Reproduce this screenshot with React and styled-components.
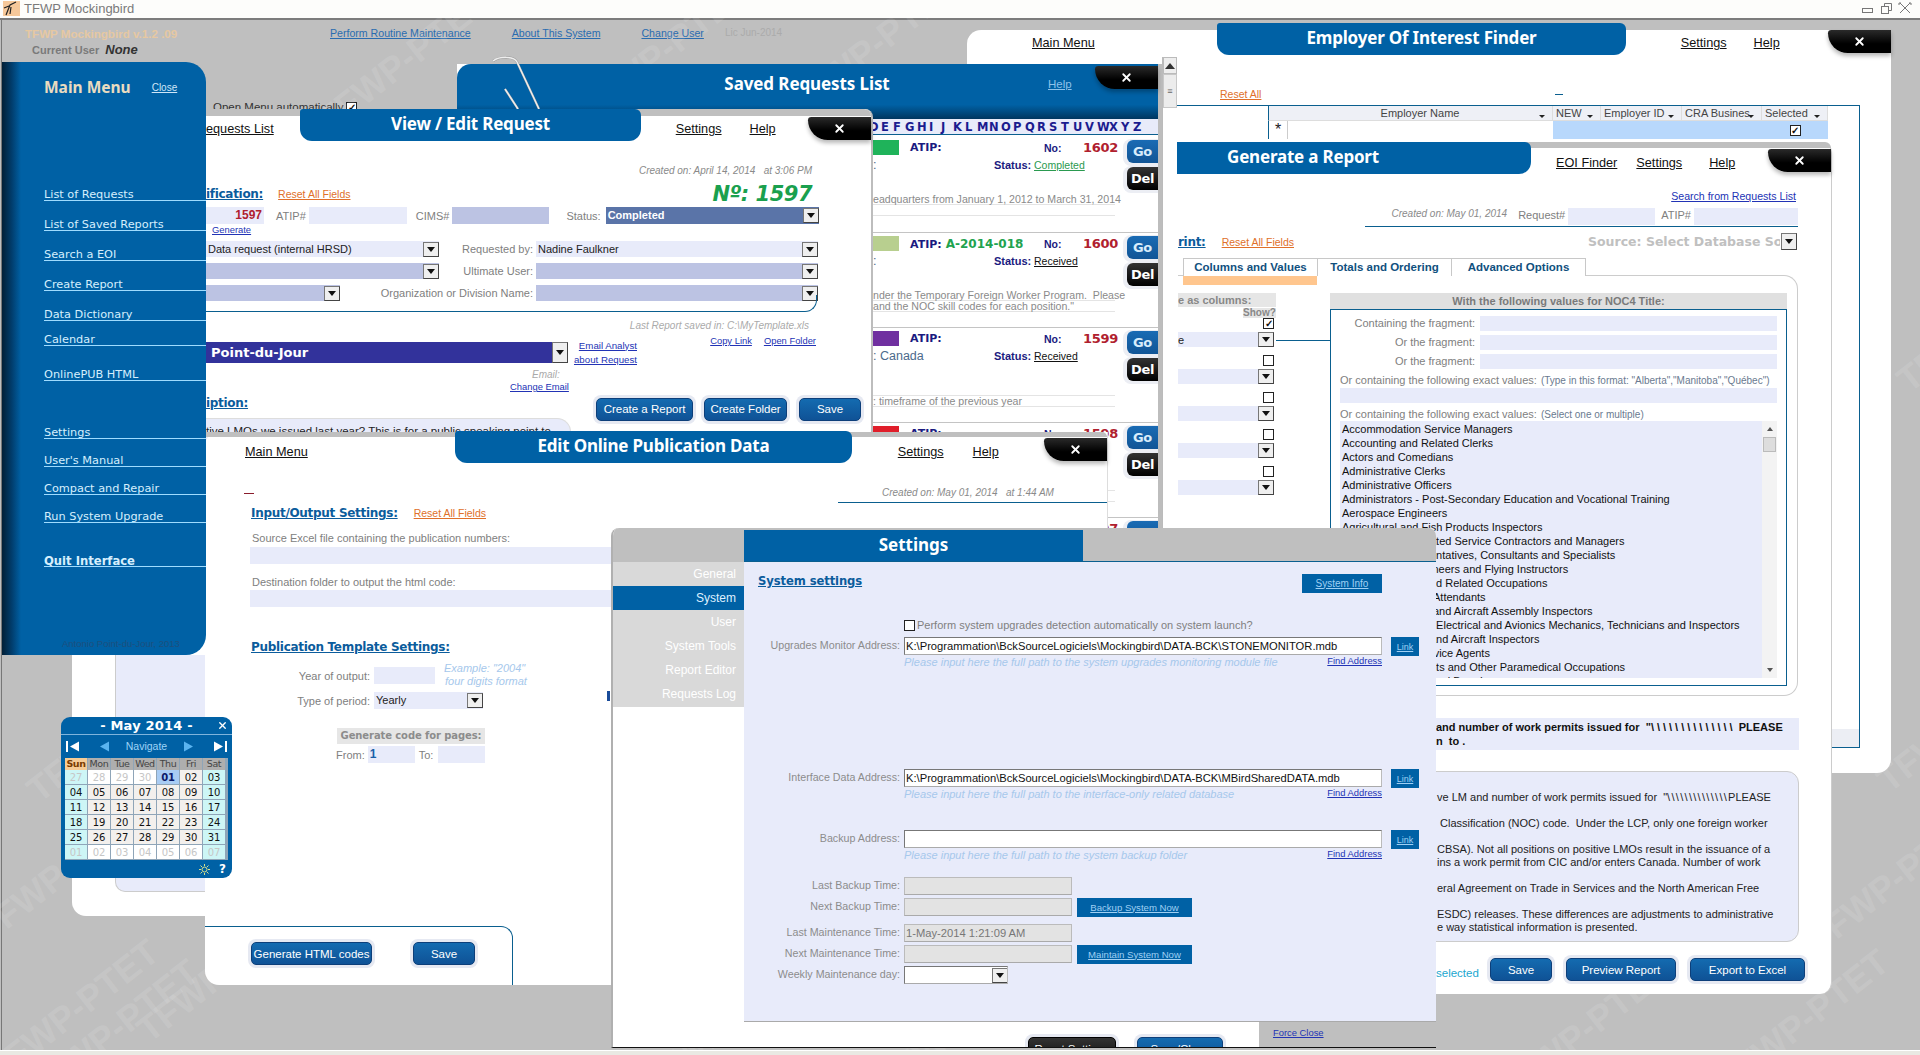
import React from "react";
import styled, { createGlobalStyle } from "styled-components";
import { X } from "lucide-react";

const SANS = "'Liberation Sans', Arial, sans-serif";
const WIDE = "'DejaVu Sans', Verdana, sans-serif";
const HEAD = "'Noto Sans', 'Liberation Sans', sans-serif";
const BLUE = "#0061a5";
const TEAL = "#0a5f8f";
const LAV = "#e8ebfa";
const LAV2 = "#bcc3e3";
const GRAY = "#bfbfbf";

const Global = createGlobalStyle`
  html, body { margin: 0; padding: 0; width: 1920px; height: 1055px; overflow: hidden; background: #c0c0c0; }
  * { box-sizing: border-box; }
  #root { width: 1920px; height: 1055px; }
`;

const Screen = styled.div`
  position: relative; width: 1920px; height: 1055px; overflow: hidden; display: flex; flex-direction: column;
  font: 11px/14px ${SANS}; color: #222; background: ${GRAY};
`;
const TitleBar = styled.header`
  height: 20px; flex: none; display: flex; align-items: center; gap: 4px; padding: 0 8px 2px 3px;
  background: #fdfdfb; border-bottom: 2px solid #7c7c7c; color: #7a7a7a; font: 13px ${SANS};
`;
const Controls = styled.svg`margin-left: auto;`;
const Desktop = styled.main`flex: 1; border-left: 1px solid #777; margin-left: 1px; display: flex; flex-direction: column;`;
const HeaderBar = styled.div`height: 42px; flex: none; display: flex; position: relative;`;
const Brand = styled.div`width: 328px; padding: 7px 0 0 23px;`;
const BrandName = styled.div`font: bold 11.6px/14px ${SANS}; color: #e6c8a2;`;
const BrandUser = styled.div`font: bold 11px/16px ${SANS}; color: #7a7a7a; padding-left: 7px; margin-top: 1px; em { font: italic bold 13px ${SANS}; color: #333; margin-left: 6px; }`;
const HeaderLinks = styled.nav`display: flex; gap: 41px; padding-top: 6px; align-items: flex-start;`;
const HeaderLink = styled.span`color: #2a6cb0; text-decoration: underline; font-size: 10.6px;`;
const License = styled.span`color: #ababab; font-size: 10px; margin-left: -20px;`;
const OpenMenu = styled.div`margin: 38px 0 0 211px; display: flex; align-items: center; gap: 3px; color: #333; height: 14px; font-size: 11.5px;`;
const Watermark = styled.span`
  position: absolute; left: ${p => p.$x}px; top: ${p => p.$y}px; transform: rotate(-38deg);
  font: bold 36px ${SANS}; color: rgba(255,255,255,.11); white-space: nowrap;
`;
const Win = styled.section`
  position: absolute; left: ${p => p.$x}px; top: ${p => p.$y}px; width: ${p => p.$w}px; height: ${p => p.$h}px;
  background: ${p => p.$bg || "#fff"}; border-radius: ${p => p.$r || "0"};
  display: flex; flex-direction: column;
  ${p => p.$edge ? `border-right: ${p.$edge};` : ""}
`;
const Band = styled.div`height: ${p => p.$h}px; flex: none; background: ${GRAY}; border-radius: 0 10px 0 0;`;
const TitleTab = styled.h2`
  position: absolute; left: ${p => p.$l}px; top: ${p => p.$t}px; width: ${p => p.$w}px; height: ${p => p.$h || 32}px; margin: 0; padding-bottom: 4px;
  background: ${BLUE}; color: #fff; font: bold 17px ${HEAD}; display: flex; align-items: center; justify-content: center;
  border-radius: 3px 6px 12px 12px; letter-spacing: -.2px;
`;
const CloseTab = styled.div`
  position: absolute; right: ${p => p.$rt || 0}px; top: ${p => p.$t}px; width: 63px; height: 23px;
  background: linear-gradient(#2a2a2a, #000 60%); border-radius: 4px 0 0 24px;
  box-shadow: 0 3px 4px rgba(0,0,0,.28); color: #fff; display: flex; align-items: center; justify-content: center;
`;
const CloseIcon = ({ t, rt }) => <CloseTab $t={t} $rt={rt}><X size={13} strokeWidth={3.4} /></CloseTab>;
const TabLink = styled.span`font: 12.7px ${SANS}; color: #111; text-decoration: underline; margin-left: ${p => p.$ml || 0}px;`;
const TopRow = styled.div`height: ${p => p.$h}px; flex: none; display: flex; align-items: center; padding-left: ${p => p.$pl}px;`;
const Orange = styled.span`color: #e0702a; text-decoration: underline; font-size: 10.5px; margin-left: ${p => p.$ml || 0}px;`;
const BlueLink = styled.span`color: #2233b5; text-decoration: underline; font-size: ${p => p.$s || 9.4}px; margin-left: ${p => p.$ml || 0}px; white-space: nowrap;`;
const FindLink = styled(BlueLink)`margin-top: -2px;`;
const Section = styled.span`font: bold 12px ${WIDE}; color: #0b5c9c; text-decoration: underline; letter-spacing: -.3px; white-space: nowrap;`;
const SectionTop = styled(Section)`align-self: flex-start;`;
const Lbl = styled.span`color: ${p => p.$c || "#808080"}; font-size: ${p => p.$s || 11}px; white-space: nowrap; width: ${p => p.$w ? p.$w + "px" : "auto"}; text-align: ${p => p.$a || "left"}; flex: none; margin-left: ${p => p.$ml || 0}px;`;
const Ital = styled.span`font: italic ${p => p.$s || 10}px ${SANS}; color: ${p => p.$c || "#8a8a8a"}; white-space: pre;`;
const Input = styled.div`
  width: ${p => p.$w ? p.$w + "px" : "auto"}; ${p => p.$w ? "" : "flex: 1;"} height: ${p => p.$h || 17}px; flex-shrink: 0;
  background: ${p => p.$bg || LAV}; margin-left: ${p => p.$ml || 0}px; color: ${p => p.$c || "#222"};
  font: ${p => p.$bold ? "bold " : ""}${p => p.$fs || 11}px/${p => p.$h || 17}px ${SANS}; padding: 0 2px; text-align: ${p => p.$a || "left"};
  white-space: nowrap; overflow: hidden; display: flex; align-items: center; justify-content: space-between;
`;
const DropBtn = styled.span`
  width: 16px; height: 15px; flex: none; background: #efefef; border: 1px solid #777; border-right-color: #444; border-bottom-color: #444;
  display: inline-flex; align-items: center; justify-content: center; margin-left: auto; position: relative; right: -2px;
  &::after { content: ""; border: 4px solid transparent; border-top: 5px solid #111; border-bottom: 0; }
`;
const SourceBtn = styled(DropBtn)`margin-left: 1px; right: 0; height: 17px;`;
const Btn = styled.button`
  width: ${p => p.$w}px; height: 23px; flex: none; margin: 0 0 0 ${p => p.$ml || 0}px; padding: 0;
  background: linear-gradient(#146bb0, #0f5296); border: 1px solid #0d3f7a; border-radius: 5px; color: #fff;
  font: 11.5px ${SANS}; box-shadow: 0 0 0 3px #e6e9f2;
`;
const Check = styled.span`
  width: 11px; height: 11px; flex: none; background: #fff; border: 1px solid #222; display: inline-flex; align-items: center; justify-content: center;
  font: bold 10px/9px ${SANS}; color: #111; margin-left: ${p => p.$ml || 0}px;
`;

/* Main menu */
const Menu = styled.aside`
  position: absolute; left: 2px; top: 62px; width: 204px; height: 593px; border-radius: 0 20px 20px 0;
  background: linear-gradient(90deg, #011f36 0, #013e6e 10px, ${BLUE} 19px); padding: 15px 0 0 42px; display: flex; flex-direction: column;
`;
const MenuHead = styled.div`height: 20px; flex: none; display: flex; align-items: center; gap: 21px;`;
const MenuTitle = styled.span`font: bold 15.5px ${HEAD}; color: #eadcc0;`;
const MenuClose = styled.span`font: 10px ${SANS}; color: #cfe6f8; text-decoration: underline;`;
const MenuItem = styled.div`
  height: ${p => p.$h}px; flex: none; border-bottom: 1px solid #9fdcff; display: flex; align-items: flex-end;
  font: ${p => p.$b ? "bold " : ""}${p => p.$b ? 11.6 : 11.3}px/10px ${WIDE}; color: #d6effd;
`;
const MenuSign = styled.div`margin: 71px 0 0 18px; font: 9.5px ${SANS}; color: #1d4f7d;`;
const menu = [["List of Requests", 104], ["List of Saved Reports", 30], ["Search a EOI", 30], ["Create Report", 30], ["Data Dictionary", 30], ["Calendar", 25], ["OnlinePUB HTML", 35], ["Settings", 58], ["User's Manual", 28], ["Compact and Repair", 28], ["Run System Upgrade", 28], ["Quit Interface", 44, true]];

/* back panel */
const BackPanel = styled.div`margin: 255px 0 0 43px; height: 237px; flex: none; width: 90px; background: ${LAV}; border: 1px solid #ccc; border-top: 0; border-right: 0; border-radius: 0 0 0 10px;`;

/* Employer */
const Tick = styled.span`display: block; width: 8px; height: 1px; background: ${p => p.$c}; margin-left: ${p => p.$ml}px;`;
const EmpFrame = styled.div`margin: 4px 0 0 133px; width: 760px; height: 643px; border: 1px solid ${TEAL}; flex: none; background: #fff; display: flex; flex-direction: column; position: relative;`;
const EmpGrid = styled.div`display: grid; grid-template-columns: 167px 20px 265px 48px 81px 80px 66px; height: ${p => p.$h}px; flex: none;`;
const EmpBlank = styled.div`background: #fff;`;
const EmpCorner = styled.div`background: #eef0f6; border-left: 1px solid ${TEAL}; border-bottom: 1px solid #ddd;`;
const EmpHead = styled.div`
  background: #eef0f6; border-right: 1px solid #ddd; border-bottom: 1px solid #ddd; color: #444; font-size: 11px; display: flex; align-items: center;
  justify-content: ${p => p.$c ? "center" : "flex-start"}; padding: 0 3px; white-space: nowrap; overflow: hidden; position: relative;
  &::after { content: ""; position: absolute; right: 7px; top: 9px; border: 3px solid transparent; border-top: 3px solid #222; border-bottom: 0; }
`;
const EmpCell = styled.div`background: ${p => p.$bg}; display: flex; align-items: center; justify-content: center; font-size: 16px; ${p => p.$br ? `border-left: 1px solid ${TEAL}; border-right: 1px solid #ccc;` : ""}`;
const EmpScroll = styled.div`margin-top: auto; height: 18px; background: #eceef4; flex: none;`;

/* Generate */
const ReqBar = styled.div`margin: 5px 0 0 290px; width: 433px; height: 19px; flex: none; border-bottom: 1.5px solid ${TEAL}; display: flex; align-items: flex-start; justify-content: flex-end;`;
const FlexLine = styled.div`display: flex; align-items: center; flex: none; height: ${p => p.$h}px; margin: ${p => p.$mt || 0}px 0 0 ${p => p.$ml || 0}px; width: ${p => p.$w ? p.$w + "px" : "auto"}; padding-right: ${p => p.$pr || 0}px; justify-content: ${p => p.$j || "flex-start"};`;
const Source = styled.span`font: bold 12.5px ${WIDE}; color: #c0c0c0; margin-left: ${p => p.$ml}px; width: 192px; overflow: hidden; white-space: nowrap;`;
const Tabs = styled.div`display: flex; margin: 8px 0 0 108px; height: 17px; flex: none;`;
const Tab = styled.div`
  width: 135px; height: 18px; border: 1px solid #c8c8c8; border-bottom: 0; margin-right: -1px; position: relative; text-align: center;
  font: bold 11.5px/17px ${SANS}; color: #10507e; background: #fff;
  ${p => p.$on ? `&::after { content: ""; position: absolute; left: -1px; right: 0; top: 17px; height: 9px; background: #ffc68e; }` : ""}
`;
const Panel = styled.div`margin-left: 103px; width: 620px; height: 421px; flex: none; border: 1px solid #ccc; border-left: 0; border-radius: 0 14px 14px 0; padding-top: 17px; display: flex; overflow: hidden;`;
const ColsLeft = styled.div`width: 98px; flex: none; display: flex; flex-direction: column;`;
const ColsHead = styled.div`height: 14px; flex: none; background: #e6e6e6; font: bold 11px/14px ${SANS}; color: #888;`;
const ShowHead = styled.div`height: 10px; width: 33px; align-self: flex-end; background: #e6e6e6; font: bold 10px/10px ${SANS}; color: #888; flex: none; margin-top: 1px;`;
const Pair = styled.div`height: 37px; flex: none; display: flex; flex-direction: column;`;
const CheckRow = styled.div`height: 14px; display: flex; justify-content: flex-end; padding-right: 2px; align-items: flex-start; flex: none;`;
const DdRow = styled.div`height: 15px; flex: none; display: flex; justify-content: flex-end; background: ${LAV}; padding-right: 2px; color: #222; align-items: center; font-size: 11px; width: 96px;`;
const ColsRight = styled.div`margin-left: 54px; width: 457px; flex: none; position: relative;`;
const Connector = styled.span`position: absolute; left: -54px; top: 47px; width: 54px; height: 1px; background: ${TEAL};`;
const ValHead = styled.div`height: 16px; background: #e0e0e0; font: bold 11px/16px ${SANS}; color: #7a7a7a; text-align: center;`;
const ValBox = styled.div`height: 377px; border: 1px solid ${TEAL}; padding: 6px 9px; display: flex; flex-direction: column;`;
const FragRow = styled.div`height: 15px; flex: none; display: flex; gap: 5px; margin-bottom: 4px;`;
const Small = styled.span`color: #6a7a90; font-size: 10px; margin-left: 4px;`;
const ListBox = styled.div`height: 257px; background: ${LAV}; flex: none; display: flex; overflow: hidden; color: #111;`;
const ListBody = styled.div`flex: 1; padding: 1px 0 0 2px;`;
const ListItem = styled.div`height: 14px; line-height: 14px; white-space: nowrap; padding-left: ${p => p.$pl || 0}px; font-size: 11px;`;
const ListScroll = styled.div`width: 15px; flex: none; background: #f3f3f3; display: flex; flex-direction: column; align-items: center;`;
const ArrowUp = styled.span`margin-top: 6px; border: 3px solid transparent; border-bottom: 4px solid #555; border-top: 0;`;
const ArrowDown = styled.span`margin: auto 0 6px; border: 3px solid transparent; border-top: 4px solid #555; border-bottom: 0;`;
const ScrollThumb = styled.span`width: 13px; height: 15px; background: #ddd; border: 1px solid #bbb; margin-top: 6px;`;
const BoldStrip = styled.div`margin: 22px 0 0 103px; width: 621px; height: 32px; flex: none; background: ${LAV}; padding: 2px 4px 0 258px; font: bold 11px/14px ${SANS}; color: #111; white-space: pre;`;
const Slashes = styled.span`letter-spacing: ${p => p.$ls}px;`;
const DescBox = styled.div`margin: 21px 0 0 103px; width: 621px; height: 171px; flex: none; background: ${LAV}; border: 1px solid #ccc; border-radius: 12px; padding: 19px 0 0 258px; overflow: hidden;`;
const DescLine = styled.div`height: 13px; line-height: 13px; margin-top: ${p => p.$mt || 0}px; white-space: pre; font-size: 11px; color: #222;`;
const Foot = styled.div`margin: 16px 0 0 361px; display: flex; align-items: center; height: 23px; flex: none;`;
const Cyan = styled.span`color: #1aa7d0; font-size: 11.5px; width: 54px; flex: none; margin-top: 6px;`;

/* Saved list */
const SavedHead = styled.div`height: 55px; flex: none; background: linear-gradient(${BLUE} 74%, #00365f); border-radius: 14px 0 0 0; position: relative;`;
const SavedTitle = styled.h2`position: absolute; left: 250px; top: 8px; width: 200px; text-align: center; margin: 0; color: #fff; font: bold 17px ${HEAD}; letter-spacing: -.1px;`;
const SavedHelp = styled.span`position: absolute; left: 591px; top: 13px; color: #8ec2ea; text-decoration: underline; font-size: 11.5px;`;
const Alpha = styled.div`height: 16px; flex: none; background: ${LAV}; border-bottom: 1.5px solid ${TEAL}; display: flex; padding-left: 412px; align-items: center; font: bold 11.5px ${WIDE}; color: #1b1b8f;`;
const AlphaL = styled.span`width: 12px; text-align: left; flex: none;`;
const ListRow = styled.article`height: 95px; flex: none; margin-top: ${p => p.$first ? 2 : 0}px; border-top: ${p => p.$first ? "0" : "1.5px solid #c4c4c4"}; margin-left: 416px; display: flex; padding-top: 3px;`;
const RowMain = styled.div`width: 254px; flex: none; display: flex; flex-direction: column;`;
const RowTop = styled.div`display: grid; grid-template-columns: 26px 11px 134px 39px 32px; height: 15px; align-items: center;`;
const Swatch = styled.span`height: 15px; background: ${p => p.$c}; grid-column: 1;`;
const Atip = styled.span`grid-column: 3; font: bold 11px ${WIDE}; color: #1a1a80; white-space: nowrap; b { color: #22a34f; margin-left: 4px; font: bold 12px ${WIDE}; }`;
const Nno = styled.span`grid-column: 4; font: bold 10.5px ${SANS}; color: #1a1a80; white-space: nowrap;`;
const Num = styled.span`grid-column: 5; font: bold 13px ${WIDE}; color: #b0202e; white-space: nowrap; letter-spacing: -.3px;`;
const RowSec = styled.div`height: 14px; margin-top: 3px; display: flex; align-items: center; color: #555; font-size: 13px;`;
const RowSecL = styled.span`width: 121px; flex: none; color: #4c6a8c; white-space: nowrap; font-size: 12.5px;`;
const StatusL = styled.span`font: bold 11px ${SANS}; color: #1a1a80; width: 40px; flex: none;`;
const StatusV = styled.span`color: ${p => p.$c}; text-decoration: underline; font-size: 10.5px;`;
const Note = styled.div`height: 11px; width: 242px; margin-top: ${p => p.$mt || 0}px; border-bottom: 1px solid #e4e4e4; font-size: 10.6px; line-height: 11px; color: #8a8a8a; white-space: pre; overflow: visible;`;
const RowBtns = styled.div`width: 31px; flex: none; display: flex; flex-direction: column; gap: 4px;`;
const RowBtn = styled.div`height: 23px; background: ${p => p.$c}; color: ${p => p.$t}; border-radius: 6px 0 0 6px; font: bold 13px/23px ${WIDE}; text-align: center; box-shadow: -2px 1px 0 2px #eceef4; letter-spacing: -.3px;`;
const SideScroll = styled.div`position: absolute; left: 705px; top: -7px; width: 15px; height: 471px; display: flex; flex-direction: column; background: #fff; border-left: 1px solid #bbb;`;
const ScrollUp = styled.div`height: 17px; background: #eee; border: 1px solid #bbb; display: flex; align-items: center; justify-content: center; &::after { content: ""; border: 5px solid transparent; border-bottom: 6px solid #333; border-top: 0; }`;
const SideThumb = styled.div`height: 34px; background: #ececec; border: 1px solid #c8c8c8; display: flex; align-items: center; justify-content: center; font: 9px/5px ${SANS}; color: #666;`;
const Clip = styled.svg`position: absolute; left: 488px; top: 55px;`;

/* View */
const ViewLine = styled.div`display: flex; align-items: center; flex: none; height: ${p => p.$h}px; margin-top: ${p => p.$mt || 0}px; padding-left: ${p => p.$pl ?? 56}px; padding-right: ${p => p.$pr || 0}px; justify-content: ${p => p.$j || "flex-start"};`;
const BigNum = styled.span`font: italic bold 21px ${WIDE}; color: #1aa04e; margin-left: auto; letter-spacing: -.5px;`;
const Curve = styled.div`position: absolute; left: 0; top: 186px; width: 667px; height: 17px; border-right: 1px solid ${TEAL}; border-bottom: 1px solid ${TEAL}; border-radius: 0 0 12px 0;`;
const Analyst = styled.div`width: 362px; height: 21px; flex: none; background: #32329b; color: #fff; font: bold 13px/21px ${WIDE}; display: flex; align-items: center; white-space: nowrap; overflow: hidden; padding-left: 5px;`;
const AnalystBtn = styled(DropBtn)`height: 21px; width: 16px; right: 0;`;
const EmailBox = styled.div`margin-left: 9px; display: flex; flex-direction: column; align-items: flex-end; line-height: 12px; gap: 2px; width: 60px;`;
const ViewBody = styled.div`margin: -4px 0 0 56px; width: 365px; height: 40px; background: ${LAV}; border: 1px solid #ddd; border-left: 0; border-radius: 0 14px 0 0; padding-top: 5px; font-size: 11.5px; white-space: nowrap; overflow: hidden; color: #222; flex: none;`;

/* Edit */
const DarkTick = styled.span`position: absolute; left: 39px; top: 61px; width: 10px; height: 1px; background: #8a1c2c;`;
const EditCreated = styled.div`margin: 18px 0 0 633px; height: 18px; flex: none; border-bottom: 1px solid ${TEAL}; padding-left: 44px;`;
const EditBottom = styled.div`margin-top: 163px; width: 308px; height: 59px; flex: none; border-top: 1px solid ${TEAL}; border-right: 1px solid ${TEAL}; border-radius: 0 12px 0 0; padding: 15px 0 0 46px; display: flex;`;
const Ex = styled.div`font: italic 11px/13px ${SANS}; color: #a6c8ec; margin-left: 9px; margin-top: -2px; span { padding-left: 1px; }`;
const GenHead = styled.div`margin: 19px 0 0 132px; width: 148px; height: 16px; flex: none; background: #e6e6e6; font: bold 10px/16px ${WIDE}; color: #8c8c8c; text-align: center; white-space: nowrap; overflow: hidden; letter-spacing: -.1px;`;
const Stub = styled.span`position: absolute; left: 402px; top: 259px; width: 3px; height: 10px; background: #1a4c9a;`;

/* Settings */
const SetWin = styled.section`
  position: absolute; left: 611px; top: 528px; width: 825px; height: 520px; display: flex; background: #fff;
  border-left: 2px solid #b0b0b0; border-bottom: 1px solid #111; border-radius: 8px 8px 0 0; overflow: hidden;
`;
const SetNav = styled.nav`width: 131px; flex: none; display: flex; flex-direction: column;`;
const SetCap = styled.div`height: 34px; background: ${GRAY}; flex: none;`;
const SetNavItem = styled.div`
  height: 24.1px; flex: none; text-align: right; padding-right: 8px; font-size: 12px; line-height: 24px;
  background: ${p => p.$on ? BLUE : "#d9d9d9"}; color: ${p => p.$on ? "#dff0ff" : "#fff"};
`;
const SetMain = styled.div`flex: 1; display: flex; flex-direction: column; min-width: 0;`;
const SetBand = styled.div`height: 34px; flex: none; background: ${GRAY}; border-bottom: 1px solid ${TEAL}; display: flex; padding-top: 2px;`;
const SetTitle = styled.h2`width: 339px; margin: 0; background: ${BLUE}; color: #fff; font: bold 17px/30px ${HEAD}; text-align: center;`;
const SetBody = styled.div`height: 460px; flex: none; background: ${LAV}; border-bottom: 1px solid #aaa; display: flex; flex-direction: column;`;
const SetHeadRow = styled.div`height: 19px; margin-top: 12px; padding: 0 54px 0 14px; display: flex; align-items: flex-start; justify-content: space-between; flex: none;`;
const MiniBtn = styled.span`
  width: ${p => p.$w}px; height: ${p => p.$h || 19}px; flex: none; background: ${BLUE}; color: #9fd0f4; text-decoration: underline;
  font-size: ${p => p.$s || 10}px; display: flex; align-items: center; justify-content: center; margin-left: ${p => p.$ml || 0}px; white-space: nowrap;
`;
const SetSection = styled(Section)`font-size: 11.6px; letter-spacing: -.1px;`;
const CheckLine = styled.div`margin: 26px 0 0 160px; height: 12px; display: flex; align-items: center; flex: none; color: #808080; font-size: 11px; gap: 2px;`;
const FormRow = styled.div`display: flex; height: ${p => p.$h || 19}px; flex: none; margin-top: ${p => p.$mt || 0}px; align-items: flex-start;`;
const FormLabel = styled.span`width: 156px; flex: none; text-align: right; color: #8c8c8c; font-size: 10.7px; line-height: 16px; white-space: nowrap;`;
const TextBox = styled.div`
  margin-left: 4px; width: ${p => p.$w}px; height: 18px; flex: none; border: 1px solid ${p => p.$dis ? "#bbb" : "#777"}; border-right-color: #bbb; border-bottom-color: #aaa;
  background: ${p => p.$dis ? "#e3e3e3" : "#fff"}; color: ${p => p.$dis ? "#777" : "#111"}; font-size: 11.2px; line-height: 16px; padding: 0 1px; white-space: nowrap; overflow: hidden; display: flex; align-items: center;
`;
const HintRow = styled.div`margin-left: 160px; width: 478px; display: flex; height: 15px; flex: none; justify-content: space-between; align-items: flex-start;`;
const SetFooter = styled.div`flex: 1; display: flex; overflow: hidden;`;
const FootLeft = styled.div`width: 515px; flex: none; padding: 15px 0 0 284px; display: flex; background: #fff;`;
const FootBtn = styled(Btn)`background: ${p => p.$dark ? "linear-gradient(#333,#111)" : undefined}; border-color: ${p => p.$dark ? "#000" : undefined};`;
const FootRight = styled.div`flex: 1; background: ${GRAY}; padding: 3px 0 0 14px;`;

/* Calendar */
const Cal = styled.div`position: absolute; left: 61px; top: 717px; width: 171px; height: 161px; background: ${BLUE}; border-radius: 9px; display: flex; flex-direction: column; padding: 0 4px;`;
const CalTitle = styled.div`height: 18px; flex: none; margin: 0 -4px; border-bottom: 1px solid #7fb4dc; display: flex; align-items: center; justify-content: center; color: #fff; font: bold 13px ${WIDE}; position: relative; letter-spacing: .2px;`;
const CalClose = styled.span`position: absolute; right: 4px; top: 3px; display: flex;`;
const CalNav = styled.div`height: 22px; flex: none; display: flex; align-items: center; justify-content: space-between; color: #9ed4f8; font-size: 10.5px; padding: 0 1px 0 1px;`;
const CalBar = styled.svg`flex: none;`;
const CalGrid = styled.div`display: grid; grid-template-columns: repeat(7, 23px); grid-template-rows: 12px repeat(6, 15px); margin-top: 1px; background: #8fa5b8;`;
const CalHead = styled.div`background: ${p => p.$sun ? "#f6cc96" : "#aeaeae"}; color: ${p => p.$sun ? "#7a3c00" : "#444"}; font: ${p => p.$sun ? "bold " : ""}9.5px/12px ${WIDE}; text-align: center; border-right: 1px solid #8fa5b8; letter-spacing: -.4px;`;
const CalCell = styled.div`
  background: ${p => p.$sel ? "#a8ccf4" : p.$we ? "#cdf6f6" : p.$out ? "#fff" : "#f3f0ed"};
  color: ${p => p.$sel ? "#0b1a6a" : p.$out ? "#c6c6c6" : "#111"}; font: ${p => p.$sel ? "bold " : ""}10px/16px ${WIDE};
  text-align: center; border: 1px solid #8fa5b8; border-width: 0 1px 1px 0; letter-spacing: -.2px;
`;
const CalFoot = styled.div`flex: 1; display: flex; align-items: center; justify-content: flex-end; gap: 9px; padding-right: 2px; color: #fff; font: bold 12px ${WIDE};`;
const Edge = styled.div`position: absolute; left: 0; right: 0; bottom: 0; height: 5px; background: #e9e9e3; border-top: 1px solid #fff;`;

const watermarks = [[300, 40], [560, 30], [770, 25], [10, 710], [-40, 850], [120, 950], [-30, 990], [620, 1005], [860, 1000], [1480, 1010], [1700, 1000], [1790, 860], [1860, 700], [1880, 300], [10, 1010]];

const Arrow = ({ dir, bar }) => (
  <CalBar width="16" height="13" viewBox="0 0 16 13">
    <g fill={bar ? "#fff" : "#5ab4f0"}>
      {bar && dir < 0 && <rect x="0" y="1" width="2" height="11" />}
      {bar && dir > 0 && <rect x="14" y="1" width="2" height="11" />}
      {bar
        ? (dir < 0 ? <path d="M13 1.500V11.500L4 6.500z" /> : <path d="M3 1.500V11.500L12 6.500z" />)
        : (dir < 0 ? <path d="M13 1.500V11.500L4 6.500z" /> : <path d="M3 1.500V11.500L12 6.500z" />)}
    </g>
  </CalBar>
);

const rows = [
  { c: "#1fb35a", atip: "", no: "1602", sec: ":", st: "Completed", sc: "#2a9a50", notes: ["eadquarters from January 1, 2012 to March 31, 2014", ""] },
  { c: "#b8cf8f", atip: "A-2014-018", no: "1600", sec: ":", st: "Received", sc: "#111", notes: ["nder the Temporary Foreign Worker Program.  Please", "and the NOC skill codes for each position.\""] },
  { c: "#7030a0", atip: "", no: "1599", sec: ": Canada", st: "Received", sc: "#111", notes: ["", ": timeframe of the previous year"] },
  { c: "#e01e2a", atip: "", no: "1598", sec: ":", st: "Received", sc: "#111", notes: ["", ""] },
  { c: "#2a9a50", atip: "", no: "1597", sec: ":", st: "Completed", sc: "#2a9a50", notes: ["", ""] },
];

const listItems = [
  ["Accommodation Service Managers"], ["Accounting and Related Clerks"], ["Actors and Comedians"], ["Administrative Clerks"], ["Administrative Officers"],
  ["Administrators - Post-Secondary Education and Vocational Training"], ["Aerospace Engineers"], ["Agricultural and Fish Products Inspectors"],
  ["ated Service Contractors and Managers", 88], ["entatives, Consultants and Specialists", 88], ["ineers and Flying Instructors", 88], ["nd Related Occupations", 88],
  ["Attendants", 91], ["and Aircraft Assembly Inspectors", 91], [", Electrical and Avionics Mechanics, Technicians and Inspectors", 88], ["and Aircraft Inspectors", 88],
  ["rvice Agents", 88], ["nts and Other Paramedical Occupations", 88], ["imal Breeders", 88],
];

const days = [];
[27, 28, 29, 30].forEach(d => days.push({ d, out: true }));
for (let d = 1; d <= 31; d++) days.push({ d });
for (let d = 1; d <= 7; d++) days.push({ d, out: true });

const SL = "\\".repeat(14);

export default function App() {
  return (
    <Screen>
      <Global />
      <TitleBar>
        <svg width="17" height="15" viewBox="0 0 17 15"><rect width="17" height="15" fill="#f6c89a" /><path d="M3 14 7 4l6-3M8 6l-1 7M6 5 1 7" stroke="#222" fill="none" strokeWidth="1.2" /></svg>
        TFWP Mockingbird
        <Controls width="50" height="14" viewBox="0 0 50 14" fill="none" stroke="#777">
          <rect x="0.500" y="7.500" width="10" height="4" />
          <rect x="19.500" y="5.500" width="7" height="7" /><path d="M22.500 5V2.500h7v7H27" />
          <path d="M38 2l10 10M48 2 38 12M39 2h-2v2M47 2h2v2" />
        </Controls>
      </TitleBar>
      <Desktop>
        <HeaderBar>
          <Brand>
            <BrandName>TFWP Mockingbird v.1.2 .09</BrandName>
            <BrandUser>Current User<em>None</em></BrandUser>
          </Brand>
          <HeaderLinks>
            <HeaderLink>Perform Routine Maintenance</HeaderLink>
            <HeaderLink>About This System</HeaderLink>
            <HeaderLink>Change User</HeaderLink>
            <License>Lic Jun-2014</License>
          </HeaderLinks>
        </HeaderBar>
        <OpenMenu>Open Menu automatically <Check>✓</Check></OpenMenu>
      </Desktop>
      {watermarks.map(([x, y], i) => <Watermark key={i} $x={x} $y={y}>TFWP-PTET</Watermark>)}

      <Win $x={72} $y={400} $w={140} $h={516} $r="0 0 0 14px"><BackPanel /></Win>

      {/* Employer of interest finder */}
      <Win $x={967} $y={30} $w={924} $h={743} $r="14px 0 14px 0">
        <TitleTab $l={250} $t={-7} $w={409}>Employer Of Interest Finder</TitleTab>
        <CloseIcon t={0} />
        <TopRow $h={26} $pl={65}>
          <TabLink>Main Menu</TabLink>
          <TabLink $ml={586}>Settings</TabLink>
          <TabLink $ml={27}>Help</TabLink>
        </TopRow>
        <FlexLine $h={14} $mt={31}>
          <Orange $ml={253}>Reset All</Orange>
          <Tick $c={TEAL} $ml={294} />
        </FlexLine>
        <EmpFrame>
          <EmpGrid $h={15}>
            <EmpBlank /><EmpCorner />
            <EmpHead $c>Employer Name</EmpHead>
            <EmpHead>NEW</EmpHead>
            <EmpHead>Employer ID</EmpHead>
            <EmpHead>CRA Busines</EmpHead>
            <EmpHead>Selected</EmpHead>
          </EmpGrid>
          <EmpGrid $h={18}>
            <EmpCell $bg="#fff" />
            <EmpCell $bg="#fff" $br>*</EmpCell>
            <EmpCell $bg="#fff" />
            <EmpCell $bg="#b8d8fc" /><EmpCell $bg="#b8d8fc" /><EmpCell $bg="#b8d8fc" />
            <EmpCell $bg="#b8d8fc"><Check>✓</Check></EmpCell>
          </EmpGrid>
          <EmpScroll />
        </EmpFrame>
      </Win>

      {/* Generate a report */}
      <Win $x={1075} $y={142} $w={757} $h={852} $r="0 10px 12px 0" $edge="1px solid #ccc">
        <Band $h={6} />
        <TitleTab $l={0} $t={0} $w={456}>Generate a Report</TitleTab>
        <CloseIcon t={7} />
        <TopRow $h={30} $pl={481}>
          <TabLink>EOI Finder</TabLink>
          <TabLink $ml={19}>Settings</TabLink>
          <TabLink $ml={27}>Help</TabLink>
        </TopRow>
        <FlexLine $h={14} $mt={11} $pr={35} $j="flex-end"><BlueLink $s={10.6}>Search from Requests List</BlueLink></FlexLine>
        <ReqBar>
          <Ital>Created on: May 01, 2014</Ital>
          <Lbl $ml={11}>Request#</Lbl>
          <Input $w={87} $ml={3} />
          <Lbl $ml={6}>ATIP#</Lbl>
          <Input $w={104} $ml={3} />
        </ReqBar>
        <FlexLine $h={17} $mt={6} $ml={103}>
          <Section>rint:</Section>
          <Orange $ml={16}>Reset All Fields</Orange>
          <Source $ml={294}>Source: Select Database Source</Source>
          <SourceBtn />
        </FlexLine>
        <Tabs>
          <Tab $on>Columns and Values</Tab>
          <Tab>Totals and Ordering</Tab>
          <Tab>Advanced Options</Tab>
        </Tabs>
        <Panel>
          <ColsLeft>
            <ColsHead>e as columns:</ColsHead>
            <ShowHead>Show?</ShowHead>
            <Pair><CheckRow><Check>✓</Check></CheckRow><DdRow>e<DropBtn /></DdRow></Pair>
            <Pair><CheckRow><Check /></CheckRow><DdRow><DropBtn /></DdRow></Pair>
            <Pair><CheckRow><Check /></CheckRow><DdRow><DropBtn /></DdRow></Pair>
            <Pair><CheckRow><Check /></CheckRow><DdRow><DropBtn /></DdRow></Pair>
            <Pair><CheckRow><Check /></CheckRow><DdRow><DropBtn /></DdRow></Pair>
          </ColsLeft>
          <ColsRight>
            <Connector />
            <ValHead>With the following values for  NOC4 Title:</ValHead>
            <ValBox>
              <FragRow><Lbl $w={135} $a="right">Containing the fragment:</Lbl><Input $h={15} /></FragRow>
              <FragRow><Lbl $w={135} $a="right">Or the fragment:</Lbl><Input $h={15} /></FragRow>
              <FragRow><Lbl $w={135} $a="right">Or the fragment:</Lbl><Input $h={15} /></FragRow>
              <Lbl>Or containing the following exact values:<Small>(Type in this format: "Alberta","Manitoba","Québec")</Small></Lbl>
              <Input $h={15} $w={437} />
              <FlexLine $h={14} $mt={4}><Lbl>Or containing the following exact values:<Small>(Select one or multiple)</Small></Lbl></FlexLine>
              <ListBox>
                <ListBody>{listItems.map(([t, pl], i) => <ListItem key={i} $pl={pl}>{t}</ListItem>)}</ListBody>
                <ListScroll><ArrowUp /><ScrollThumb /><ArrowDown /></ListScroll>
              </ListBox>
            </ValBox>
          </ColsRight>
        </Panel>
        <BoldStrip>
          {'and number of work permits issued for  "'}<Slashes $ls={3}>{SL}</Slashes>{" PLEASE"}<br />{"n  to ."}
        </BoldStrip>
        <DescBox>
          <DescLine>{'ve LM and number of work permits issued for  "'}<Slashes $ls={1.300}>{SL}</Slashes>{"PLEASE"}</DescLine>
          <DescLine $mt={13}>{" Classification (NOC) code.  Under the LCP, only one foreign worker"}</DescLine>
          <DescLine $mt={13}>CBSA). Not all positions on positive LMOs result in the issuance of a</DescLine>
          <DescLine>ins a work permit from CIC and/or enters Canada. Number of work</DescLine>
          <DescLine $mt={13}>eral Agreement on Trade in Services and the North American Free</DescLine>
          <DescLine $mt={13}>ESDC) releases. These differences are adjustments to administrative</DescLine>
          <DescLine>e way statistical information is presented.</DescLine>
        </DescBox>
        <Foot>
          <Cyan>selected</Cyan>
          <Btn $w={62}>Save</Btn>
          <Btn $w={110} $ml={14}>Preview Report</Btn>
          <Btn $w={115} $ml={14}>Export to Excel</Btn>
        </Foot>
      </Win>

      {/* Saved requests list */}
      <Win $x={457} $y={64} $w={705} $h={464} $edge="4px solid #bdbdbd">
        <SavedHead>
          <SavedTitle>Saved Requests List</SavedTitle>
          <SavedHelp>Help</SavedHelp>
        </SavedHead>
        <CloseIcon t={2} />
        <SideScroll>
          <ScrollUp />
          <SideThumb>≡</SideThumb>
        </SideScroll>
        <Alpha>{"DEFGHIJKLMNOPQRSTUVWXYZ".split("").map(l => <AlphaL key={l}>{l}</AlphaL>)}</Alpha>
        {rows.map((r, i) => (
          <ListRow key={r.no} $first={i === 0}>
            <RowMain>
              <RowTop>
                <Swatch $c={r.c} />
                <Atip>ATIP:{r.atip && <b>{r.atip}</b>}</Atip>
                <Nno>No:</Nno>
                <Num>{r.no}</Num>
              </RowTop>
              <RowSec>
                <RowSecL>{r.sec}</RowSecL>
                <StatusL>Status:</StatusL>
                <StatusV $c={r.sc}>{r.st}</StatusV>
              </RowSec>
              <Note $mt={22}>{r.notes[0]}</Note>
              <Note>{r.notes[1]}</Note>
            </RowMain>
            <RowBtns>
              <RowBtn $c="linear-gradient(#1a6bb4,#115596)" $t="#d8ecfb">Go</RowBtn>
              <RowBtn $c="linear-gradient(#333,#000)" $t="#fff">Del</RowBtn>
            </RowBtns>
          </ListRow>
        ))}
      </Win>
      <Clip width="56" height="56" viewBox="0 0 56 56" fill="none" stroke="#eee" strokeWidth="1.500">
        <path d="M51 54 29 7C26 1 12 1 5 6" stroke="#9a9a9a" strokeWidth="2.200" />
        <path d="M51 54 29 7C26 1 12 1 5 6" />
        <path d="M17 34 30 54" stroke="#9a9a9a" strokeWidth="2.200" />
        <path d="M17 34 30 54" />
      </Clip>

      {/* View / edit request */}
      <Win $x={150} $y={109} $w={723} $h={325} $edge="2px solid #bdbdbd" $r="0 8px 0 0">
        <Band $h={7} />
        <TitleTab $l={150} $t={0} $w={341}>View / Edit Request</TitleTab>
        <CloseIcon t={8} />
        <ViewLine $h={26}>
          <TabLink>equests List</TabLink>
          <TabLink $ml={402}>Settings</TabLink>
          <TabLink $ml={28}>Help</TabLink>
        </ViewLine>
        <ViewLine $h={14} $mt={21} $pr={59} $j="flex-end"><Ital>{"Created on: April 14, 2014   at 3:06 PM"}</Ital></ViewLine>
        <ViewLine $h={24} $mt={5} $pr={59}>
          <Section>ification:</Section>
          <Orange $ml={15}>Reset All Fields</Orange>
          <BigNum>Nº:  1597</BigNum>
        </ViewLine>
        <ViewLine $h={17} $mt={1}>
          <Input $w={58} $bg={LAV} $c="#b0202e" $a="right" $bold $fs={12}><span /><span>1597</span></Input>
          <Lbl $ml={12}>ATIP#</Lbl>
          <Input $w={98} $ml={3} />
          <Lbl $ml={9}>CIMS#</Lbl>
          <Input $w={97} $ml={3} $bg={LAV2} />
          <Lbl $ml={17}>Status:</Lbl>
          <Input $w={213} $ml={5} $bg="#5a74a8" $c="#fff" $bold>Completed<DropBtn /></Input>
        </ViewLine>
        <ViewLine $h={12}><BlueLink $ml={6}>Generate</BlueLink></ViewLine>
        <ViewLine $h={16} $mt={5}>
          <Input $w={233} $h={16}>Data request (internal HRSD)<DropBtn /></Input>
          <Lbl $w={94} $a="right">Requested by:</Lbl>
          <Input $w={282} $h={16} $ml={3}>Nadine Faulkner<DropBtn /></Input>
        </ViewLine>
        <ViewLine $h={16} $mt={6}>
          <Input $w={233} $h={16} $bg={LAV2}><span /><DropBtn /></Input>
          <Lbl $w={94} $a="right">Ultimate User:</Lbl>
          <Input $w={282} $h={16} $ml={3} $bg={LAV2}><span /><DropBtn /></Input>
        </ViewLine>
        <ViewLine $h={16} $mt={6}>
          <Input $w={134} $h={16} $bg={LAV2}><span /><DropBtn /></Input>
          <Lbl $w={193} $a="right">Organization or Division Name:</Lbl>
          <Input $w={282} $h={16} $ml={3} $bg={LAV2}><span /><DropBtn /></Input>
        </ViewLine>
        <Curve />
        <ViewLine $h={14} $mt={17} $pr={62} $j="flex-end"><Ital $c="#aaa">Last Report saved in: C:\MyTemplate.xls</Ital></ViewLine>
        <ViewLine $h={12} $mt={3} $pr={55} $j="flex-end">
          <BlueLink>Copy Link</BlueLink>
          <BlueLink $ml={12}>Open Folder</BlueLink>
        </ViewLine>
        <ViewLine $h={21} $mt={-5}>
          <Analyst>Point-du-Jour<AnalystBtn /></Analyst>
          <EmailBox>
            <BlueLink $s={9.7}>Email Analyst</BlueLink>
            <BlueLink $s={9.7}>about Request</BlueLink>
          </EmailBox>
        </ViewLine>
        <ViewLine $h={12} $mt={5} $pl={382}><Ital $c="#aaa">Email:</Ital></ViewLine>
        <ViewLine $h={12} $mt={1} $pl={360}><BlueLink>Change Email</BlueLink></ViewLine>
        <ViewLine $h={26} $mt={3}>
          <SectionTop>iption:</SectionTop>
          <Btn $w={97} $ml={348}>Create a Report</Btn>
          <Btn $w={83} $ml={11}>Create Folder</Btn>
          <Btn $w={62} $ml={12}>Save</Btn>
        </ViewLine>
        <ViewBody>tive LMOs we issued last year? This is for a public speaking point to</ViewBody>
      </Win>

      {/* Edit online publication */}
      <Win $x={205} $y={432} $w={903} $h={553} $r="14px 0 0 14px" $edge="1px solid #ddd">
        <Band $h={5} />
        <TitleTab $l={250} $t={-1} $w={397}>Edit Online Publication Data</TitleTab>
        <CloseIcon t={6} />
        <DarkTick />
        <Stub />
        <TopRow $h={30} $pl={40}>
          <TabLink>Main Menu</TabLink>
          <TabLink $ml={590}>Settings</TabLink>
          <TabLink $ml={29}>Help</TabLink>
        </TopRow>
        <EditCreated><Ital>{"Created on: May 01, 2014   at 1:44 AM"}</Ital></EditCreated>
        <FlexLine $h={20} $ml={46}>
          <Section>Input/Output Settings:</Section>
          <Orange $ml={16}>Reset All Fields</Orange>
        </FlexLine>
        <FlexLine $h={14} $mt={8} $ml={47}><Lbl>Source Excel file containing the publication numbers:</Lbl></FlexLine>
        <FlexLine $h={17} $mt={2} $ml={45}><Input $w={500} /></FlexLine>
        <FlexLine $h={14} $mt={11} $ml={47}><Lbl>Destination folder to output the html code:</Lbl></FlexLine>
        <FlexLine $h={17} $mt={1} $ml={45}><Input $w={500} /></FlexLine>
        <FlexLine $h={20} $mt={30} $ml={46}><Section>Publication Template Settings:</Section></FlexLine>
        <FlexLine $h={17} $mt={10}>
          <Lbl $w={165} $a="right">Year of output:</Lbl>
          <Input $w={61} $ml={4} />
          <Ex>Example: "2004"<br /><span>four digits format</span></Ex>
        </FlexLine>
        <FlexLine $h={17} $mt={8}>
          <Lbl $w={165} $a="right">Type of period:</Lbl>
          <Input $w={109} $ml={4}>Yearly<DropBtn /></Input>
        </FlexLine>
        <GenHead>Generate code for pages:</GenHead>
        <FlexLine $h={17} $mt={2} $ml={131}>
          <Lbl>From:</Lbl>
          <Input $w={47} $ml={3} $c="#1a5fa8" $bold $fs={12}>1</Input>
          <Lbl $ml={4}>To:</Lbl>
          <Input $w={47} $ml={5} />
        </FlexLine>
        <EditBottom>
          <Btn $w={121}>Generate HTML codes</Btn>
          <Btn $w={62} $ml={41}>Save</Btn>
        </EditBottom>
      </Win>

      {/* Settings */}
      <SetWin>
        <SetNav>
          <SetCap />
          <SetNavItem>General</SetNavItem>
          <SetNavItem $on>System</SetNavItem>
          <SetNavItem>User</SetNavItem>
          <SetNavItem>System Tools</SetNavItem>
          <SetNavItem>Report Editor</SetNavItem>
          <SetNavItem>Requests Log</SetNavItem>
        </SetNav>
        <SetMain>
          <SetBand><SetTitle>Settings</SetTitle></SetBand>
          <SetBody>
            <SetHeadRow>
              <SetSection>System settings</SetSection>
              <MiniBtn $w={80}>System Info</MiniBtn>
            </SetHeadRow>
            <CheckLine><Check />Perform system upgrades detection automatically on system launch?</CheckLine>
            <FormRow $mt={6}>
              <FormLabel>Upgrades Monitor Address:</FormLabel>
              <TextBox $w={478}>K:\Programmation\BckSourceLogiciels\Mockingbird\DATA-BCK\STONEMONITOR.mdb</TextBox>
              <MiniBtn $w={28} $ml={9} $s={9}>Link</MiniBtn>
            </FormRow>
            <HintRow>
              <Ital $c="#a6c8ec" $s={11}>Please input here the full path to the system upgrades monitoring module file</Ital>
              <FindLink>Find Address</FindLink>
            </HintRow>
            <FormRow $mt={98}>
              <FormLabel>Interface Data Address:</FormLabel>
              <TextBox $w={478}>K:\Programmation\BckSourceLogiciels\Mockingbird\DATA-BCK\MBirdSharedDATA.mdb</TextBox>
              <MiniBtn $w={28} $ml={9} $s={9}>Link</MiniBtn>
            </FormRow>
            <HintRow>
              <Ital $c="#a6c8ec" $s={11}>Please input here the full path to the interface-only related database</Ital>
              <FindLink>Find Address</FindLink>
            </HintRow>
            <FormRow $mt={27}>
              <FormLabel>Backup Address:</FormLabel>
              <TextBox $w={478} />
              <MiniBtn $w={28} $ml={9} $s={9}>Link</MiniBtn>
            </FormRow>
            <HintRow>
              <Ital $c="#a6c8ec" $s={11}>Please input here the full path to the system backup folder</Ital>
              <FindLink>Find Address</FindLink>
            </HintRow>
            <FormRow $mt={13} $h={18}>
              <FormLabel>Last Backup Time:</FormLabel>
              <TextBox $w={168} $dis />
            </FormRow>
            <FormRow $mt={3} $h={18}>
              <FormLabel>Next Backup Time:</FormLabel>
              <TextBox $w={168} $dis />
              <MiniBtn $w={115} $ml={5} $s={9.6}>Backup System Now</MiniBtn>
            </FormRow>
            <FormRow $mt={8} $h={18}>
              <FormLabel>Last Maintenance Time:</FormLabel>
              <TextBox $w={168} $dis>1-May-2014 1:21:09 AM</TextBox>
            </FormRow>
            <FormRow $mt={3} $h={18}>
              <FormLabel>Next Maintenance Time:</FormLabel>
              <TextBox $w={168} $dis />
              <MiniBtn $w={115} $ml={5} $s={9.6}>Maintain System Now</MiniBtn>
            </FormRow>
            <FormRow $mt={3} $h={18}>
              <FormLabel>Weekly Maintenance day:</FormLabel>
              <TextBox $w={104}><DropBtn /></TextBox>
            </FormRow>
          </SetBody>
          <SetFooter>
            <FootLeft>
              <FootBtn $w={88} $dark>Reset Settings</FootBtn>
              <FootBtn $w={86} $ml={21}>Save/Close</FootBtn>
            </FootLeft>
            <FootRight><BlueLink>Force Close</BlueLink></FootRight>
          </SetFooter>
        </SetMain>
      </SetWin>

      {/* Main menu */}
      <Menu>
        <MenuHead><MenuTitle>Main Menu</MenuTitle><MenuClose>Close</MenuClose></MenuHead>
        {menu.map(([t, h, b]) => <MenuItem key={t} $h={h} $b={b}>{t}</MenuItem>)}
        <MenuSign>Antonio Point-du-Jour, 2013</MenuSign>
      </Menu>

      {/* Calendar */}
      <Cal>
        <CalTitle>- May 2014 -<CalClose><X size={11} strokeWidth={3} color="#fff" /></CalClose></CalTitle>
        <CalNav>
          <Arrow dir={-1} bar />
          <Arrow dir={-1} />
          Navigate
          <Arrow dir={1} />
          <Arrow dir={1} bar />
        </CalNav>
        <CalGrid>
          {["Sun", "Mon", "Tue", "Wed", "Thu", "Fri", "Sat"].map((d, i) => <CalHead key={d} $sun={i === 0}>{d}</CalHead>)}
          {days.map((x, i) => (
            <CalCell key={i} $out={x.out} $we={i % 7 === 0 || i % 7 === 6} $sel={!x.out && x.d === 1}>
              {String(x.d).padStart(2, "0")}
            </CalCell>
          ))}
        </CalGrid>
        <CalFoot>
          <svg width="11" height="11" viewBox="0 0 11 11" fill="none" stroke="#d8e08a"><circle cx="5.500" cy="5.500" r="2.500" /><path d="M5.500 0v2M5.500 9v2M0 5.500h2M9 5.500h2M1.500 1.500l1.500 1.500M8 8l1.500 1.500M9.500 1.500 8 3M3 8 1.500 9.500" /></svg>
          ?
        </CalFoot>
      </Cal>
      <Edge />
    </Screen>
  );
}
